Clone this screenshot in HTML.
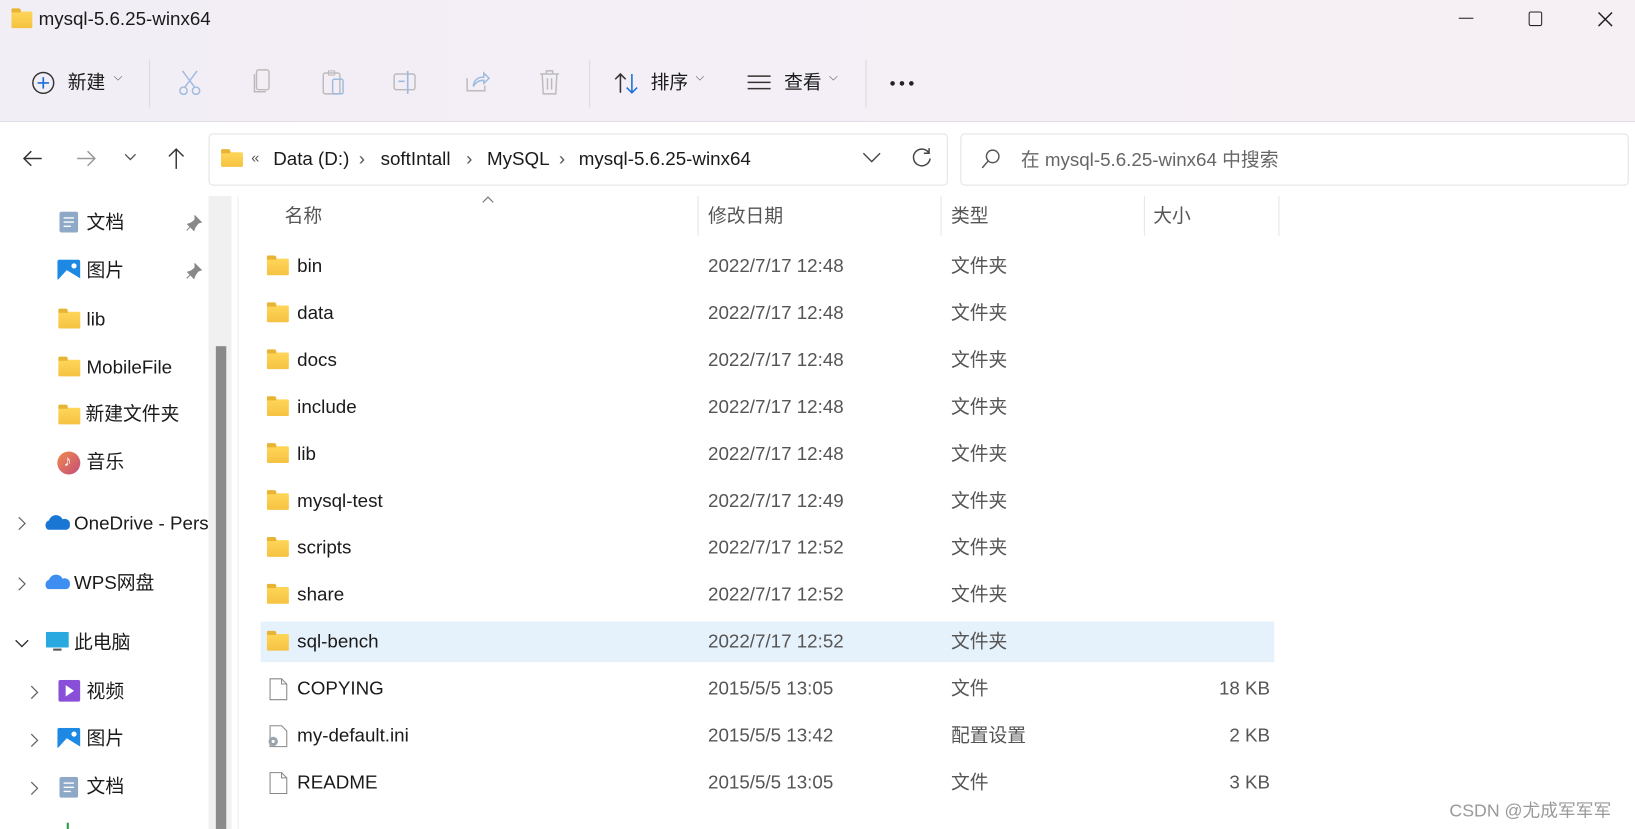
<!DOCTYPE html>
<html><head><meta charset="utf-8"><style>
*{margin:0;padding:0;box-sizing:border-box}
html,body{width:1635px;height:829px;overflow:hidden;background:#fff}
#w{position:absolute;left:0;top:0;width:1568px;height:795px;transform:scale(1.04273);transform-origin:0 0;font-family:"Liberation Sans","Noto Sans CJK SC",sans-serif;color:#1a1a1a;font-size:18px}
.a{position:absolute;white-space:nowrap}
.c{margin-top:-3px}
#top{position:absolute;left:0;top:0;width:1568px;height:117px;background:linear-gradient(90deg,#f2eef5,#f5eff6 60%,#f6f0f4);border-bottom:1px solid #e2dde4}
.sep{position:absolute;width:1px;height:46px;top:57px;background:#dcd7de}
.fold{position:absolute;width:21px;height:16px;background:linear-gradient(#ffd659,#f5c242);border-radius:1px}
.fold:before{content:"";position:absolute;left:0;top:-3px;width:9px;height:4px;background:#e8b434;border-radius:1px 2px 0 0}
.row{position:absolute;left:250px;width:972px;height:40px}
.ico{stroke:#9dbbe0;fill:none;stroke-width:1.4}
.g{color:#555}
</style></head><body><div id="w">
<div id="top">
 <div class="fold" style="left:11px;top:11px;width:20px"></div>
 <div class="a" style="left:37px;top:8px;font-size:18px">mysql-5.6.25-winx64</div>
 <div class="a" style="left:1399px;top:17px;width:14px;height:1px;background:#222"></div>
 <div class="a" style="left:1466px;top:11px;width:13px;height:14px;border:1.5px solid #222;border-radius:2px"></div>
 <svg class="a" style="left:1532px;top:11px" width="15" height="15"><path d="M1 1L14 14M14 1L1 14" stroke="#222" stroke-width="1.4"/></svg>
 <svg class="a" style="left:30px;top:68px" width="23" height="23"><circle cx="11.5" cy="11.5" r="10" fill="none" stroke="#333" stroke-width="1.4"/><path d="M11.5 6v11M6 11.5h11" stroke="#1d6fd8" stroke-width="1.6"/></svg>
 <div class="a c" style="left:65px;top:68px">新建</div><div class="a" style="left:109px;top:68px;font-size:11px;color:#555">⌵</div>
 <div class="sep" style="left:143px"></div>
 <svg class="a" style="left:170px;top:66px" width="24" height="26"><path class="ico" d="M5 2l12 16M19 2L7 18"/><circle class="ico" cx="6" cy="21" r="3.5"/><circle class="ico" cx="18" cy="21" r="3.5"/></svg>
 <svg class="a" style="left:240px;top:66px" width="22" height="26"><rect x="6" y="1" width="12" height="19" rx="2" fill="none" stroke="#bbb" stroke-width="1.4"/><path d="M4 5v17h11" fill="none" stroke="#bbb" stroke-width="1.4"/></svg>
 <svg class="a" style="left:308px;top:66px" width="24" height="26"><rect x="2" y="4" width="16" height="20" rx="2" fill="none" stroke="#bbb" stroke-width="1.4"/><rect x="7" y="2" width="6" height="4" fill="none" stroke="#bbb"/><rect x="11" y="10" width="10" height="14" rx="1.5" fill="none" stroke="#9dbbe0" stroke-width="1.4"/></svg>
 <svg class="a" style="left:376px;top:66px" width="26" height="26"><rect x="2" y="5" width="20" height="15" rx="2" fill="none" stroke="#bbb" stroke-width="1.4"/><path d="M15 2v22M6 12h6" stroke="#9dbbe0" stroke-width="1.6"/></svg>
 <svg class="a" style="left:446px;top:66px" width="24" height="26"><path d="M2 9v12h17v-5" fill="none" stroke="#bbb" stroke-width="1.4"/><path d="M8 17c0-6 4-9 10-9V4l5 5-5 5v-3c-5 0-8 2-10 6z" fill="none" stroke="#9dbbe0" stroke-width="1.4"/></svg>
 <svg class="a" style="left:516px;top:66px" width="22" height="26"><path d="M2 5h18M8 5V2h6v3M4 5l1 19h12l1-19M9 9v11M13 9v11" fill="none" stroke="#bbb" stroke-width="1.4"/></svg>
 <div class="sep" style="left:565px"></div>
 <svg class="a" style="left:588px;top:68px" width="26" height="24"><path d="M7 21V3M2 8l5-5 5 5" fill="none" stroke="#333" stroke-width="1.5"/><path d="M18 3v18M13 16l5 5 5-5" fill="none" stroke="#1d6fd8" stroke-width="1.5"/></svg>
 <div class="a c" style="left:624px;top:68px">排序</div><div class="a" style="left:667px;top:68px;font-size:11px;color:#555">⌵</div>
 <svg class="a" style="left:716px;top:70px" width="24" height="20"><path d="M1 3h22M1 9h22M1 15h22" stroke="#333" stroke-width="1.5"/></svg>
 <div class="a c" style="left:752px;top:68px">查看</div><div class="a" style="left:795px;top:68px;font-size:11px;color:#555">⌵</div>
 <div class="sep" style="left:830px"></div>
 <svg class="a" style="left:853px;top:77px" width="26" height="6"><circle cx="3" cy="3" r="2.2" fill="#222"/><circle cx="12" cy="3" r="2.2" fill="#222"/><circle cx="21" cy="3" r="2.2" fill="#222"/></svg>
</div>
<!-- nav -->
<svg class="a" style="left:21px;top:142px" width="20" height="20"><path d="M19 10H2M9 3L2 10l7 7" fill="none" stroke="#333" stroke-width="1.4"/></svg>
<svg class="a" style="left:73px;top:142px" width="20" height="20"><path d="M1 10h17M11 3l7 7-7 7" fill="none" stroke="#999" stroke-width="1.4"/></svg>
<svg class="a" style="left:119px;top:147px" width="12" height="8"><path d="M1 1l5 5 5-5" fill="none" stroke="#555" stroke-width="1.3"/></svg>
<svg class="a" style="left:159px;top:141px" width="20" height="22"><path d="M10 21V2M3 9l7-7 7 7" fill="none" stroke="#333" stroke-width="1.4"/></svg>
<div class="a" style="left:200px;top:128px;width:709px;height:50px;border:1px solid #e3e3e3;border-radius:4px"></div>
<div class="fold" style="left:212px;top:146px;width:21px;height:14px"></div>
<div class="a" style="left:241px;top:143px;font-size:14px;color:#555">«</div>
<div class="a" style="left:262px;top:142px">Data (D:)</div>
<div class="a" style="left:344px;top:142px;color:#555">›</div>
<div class="a" style="left:365px;top:142px">softIntall</div>
<div class="a" style="left:447px;top:142px;color:#555">›</div>
<div class="a" style="left:467px;top:142px">MySQL</div>
<div class="a" style="left:536px;top:142px;color:#555">›</div>
<div class="a" style="left:555px;top:142px">mysql-5.6.25-winx64</div>
<svg class="a" style="left:827px;top:146px" width="18" height="10"><path d="M1 1l8 8 8-8" fill="none" stroke="#444" stroke-width="1.3"/></svg>
<svg class="a" style="left:874px;top:141px" width="20" height="20"><path d="M17 6A8 8 0 1 0 18 11" fill="none" stroke="#444" stroke-width="1.4"/><path d="M17 1v5h-5" fill="none" stroke="#444" stroke-width="1.4"/></svg>
<div class="a" style="left:921px;top:128px;width:641px;height:50px;border:1px solid #e3e3e3;border-radius:4px"></div>
<svg class="a" style="left:940px;top:142px" width="20" height="20"><circle cx="12" cy="8" r="6" fill="none" stroke="#555" stroke-width="1.4"/><path d="M8 12l-6 7" stroke="#555" stroke-width="1.4"/></svg>
<div class="a c" style="left:979px;top:142px;color:#666">在 mysql-5.6.25-winx64 中搜索</div>
<!-- sidebar -->
<div class="a" style="left:200px;top:188px;width:22px;height:607px;background:#f0f0f0"></div>
<div class="a" style="left:207px;top:332px;width:10px;height:463px;background:#8a8a8a"></div>
<div class="a" style="left:228px;top:188px;width:1px;height:607px;background:#eee"></div>
<svg class="a" style="left:57px;top:203px" width="18" height="20"><rect width="18" height="20" rx="2" fill="#8ea8c8"/><path d="M4 6h10M4 10h10M4 14h7" stroke="#fff" stroke-width="1.3"/></svg>
<div class="a c" style="left:83px;top:202px">文档</div>
<svg class="a" style="left:178px;top:206px" width="16" height="16"><path d="M9 1l6 6-3 1-3 4-1 3-6-6 3-1 4-3zM5 11l-4 4" fill="#888" stroke="#888"/></svg>
<svg class="a" style="left:55px;top:249px" width="22" height="20"><rect width="22" height="20" rx="2" fill="#1e88e5"/><path d="M0 20l9-10 13 8v2z" fill="#fff"/><circle cx="16" cy="6" r="2.5" fill="#fff"/></svg>
<div class="a c" style="left:83px;top:248px">图片</div>
<svg class="a" style="left:178px;top:252px" width="16" height="16"><path d="M9 1l6 6-3 1-3 4-1 3-6-6 3-1 4-3zM5 11l-4 4" fill="#888" stroke="#888"/></svg>
<div class="fold" style="left:56px;top:299px"></div><div class="a" style="left:83px;top:296px">lib</div>
<div class="fold" style="left:56px;top:345px"></div><div class="a" style="left:83px;top:342px">MobileFile</div>
<div class="fold" style="left:56px;top:391px"></div><div class="a c" style="left:82px;top:386px">新建文件夹</div>
<div class="a" style="left:55px;top:433px;width:22px;height:22px;border-radius:50%;background:linear-gradient(135deg,#f08a4b,#c44d7a)"></div><div class="a" style="left:61px;top:434px;color:#fff;font-size:15px">♪</div>
<div class="a c" style="left:83px;top:432px">音乐</div>
<svg class="a" style="left:17px;top:495px" width="8" height="14"><path d="M1 1l6 6-6 6" fill="none" stroke="#666" stroke-width="1.2"/></svg>
<svg class="a" style="left:43px;top:493px" width="24" height="16"><path d="M3 15a5 5 0 0 1 1-9 7 7 0 0 1 13-1 5 5 0 0 1 4 10z" fill="#1976d2"/></svg>
<div class="a" style="left:71px;top:492px">OneDrive - Pers</div>
<svg class="a" style="left:17px;top:553px" width="8" height="14"><path d="M1 1l6 6-6 6" fill="none" stroke="#666" stroke-width="1.2"/></svg>
<svg class="a" style="left:43px;top:550px" width="24" height="16"><path d="M3 15a5 5 0 0 1 1-9 7 7 0 0 1 13-1 5 5 0 0 1 4 10z" fill="#3d8ef0"/></svg>
<div class="a c" style="left:71px;top:548px">WPS网盘</div>
<svg class="a" style="left:14px;top:613px" width="14" height="8"><path d="M1 1l6 6 6-6" fill="none" stroke="#333" stroke-width="1.3"/></svg>
<svg class="a" style="left:44px;top:606px" width="22" height="20"><rect width="22" height="15" rx="1" fill="#29a9e0"/><rect x="7" y="16" width="8" height="2" fill="#555"/></svg>
<div class="a c" style="left:71px;top:605px">此电脑</div>
<svg class="a" style="left:29px;top:657px" width="8" height="14"><path d="M1 1l6 6-6 6" fill="none" stroke="#666" stroke-width="1.2"/></svg>
<svg class="a" style="left:56px;top:652px" width="21" height="21"><rect width="21" height="21" rx="2" fill="#8a4fd8"/><path d="M7 5v11l8-5.5z" fill="#fff"/></svg>
<div class="a c" style="left:83px;top:652px">视频</div>
<svg class="a" style="left:29px;top:703px" width="8" height="14"><path d="M1 1l6 6-6 6" fill="none" stroke="#666" stroke-width="1.2"/></svg>
<svg class="a" style="left:55px;top:698px" width="22" height="20"><rect width="22" height="20" rx="2" fill="#1e88e5"/><path d="M0 20l9-10 13 8v2z" fill="#fff"/><circle cx="16" cy="6" r="2.5" fill="#fff"/></svg>
<div class="a c" style="left:83px;top:697px">图片</div>
<svg class="a" style="left:29px;top:749px" width="8" height="14"><path d="M1 1l6 6-6 6" fill="none" stroke="#666" stroke-width="1.2"/></svg>
<svg class="a" style="left:57px;top:745px" width="18" height="20"><rect width="18" height="20" rx="2" fill="#8ea8c8"/><path d="M4 6h10M4 10h10M4 14h7" stroke="#fff" stroke-width="1.3"/></svg>
<div class="a c" style="left:83px;top:743px">文档</div>
<div class="a" style="left:64px;top:789px;width:2px;height:6px;background:#2a9d4a"></div>
<!-- headers -->
<div class="a c g" style="left:273px;top:196px">名称</div>
<svg class="a" style="left:462px;top:188px" width="12" height="7"><path d="M1 6l5-5 5 5" fill="none" stroke="#777" stroke-width="1.1"/></svg>
<div class="a c g" style="left:679px;top:196px">修改日期</div>
<div class="a c g" style="left:912px;top:196px">类型</div>
<div class="a c g" style="left:1106px;top:196px">大小</div>
<div class="a" style="left:669px;top:188px;width:1px;height:38px;background:#e5e5e5"></div>
<div class="a" style="left:902px;top:188px;width:1px;height:38px;background:#e5e5e5"></div>
<div class="a" style="left:1097px;top:188px;width:1px;height:38px;background:#e5e5e5"></div>
<div class="a" style="left:1226px;top:188px;width:1px;height:38px;background:#e5e5e5"></div>
<div class="row" style="top:596px;height:39px;background:#e5f1fb"></div>
<div class="fold" style="left:256px;top:248px"></div><div class="a" style="left:285px;top:245px">bin</div><div class="a g" style="left:679px;top:245px">2022/7/17 12:48</div><div class="a c g" style="left:912px;top:244px">文件夹</div>
<div class="fold" style="left:256px;top:293px"></div><div class="a" style="left:285px;top:290px">data</div><div class="a g" style="left:679px;top:290px">2022/7/17 12:48</div><div class="a c g" style="left:912px;top:289px">文件夹</div>
<div class="fold" style="left:256px;top:338px"></div><div class="a" style="left:285px;top:335px">docs</div><div class="a g" style="left:679px;top:335px">2022/7/17 12:48</div><div class="a c g" style="left:912px;top:334px">文件夹</div>
<div class="fold" style="left:256px;top:383px"></div><div class="a" style="left:285px;top:380px">include</div><div class="a g" style="left:679px;top:380px">2022/7/17 12:48</div><div class="a c g" style="left:912px;top:379px">文件夹</div>
<div class="fold" style="left:256px;top:428px"></div><div class="a" style="left:285px;top:425px">lib</div><div class="a g" style="left:679px;top:425px">2022/7/17 12:48</div><div class="a c g" style="left:912px;top:424px">文件夹</div>
<div class="fold" style="left:256px;top:473px"></div><div class="a" style="left:285px;top:470px">mysql-test</div><div class="a g" style="left:679px;top:470px">2022/7/17 12:49</div><div class="a c g" style="left:912px;top:469px">文件夹</div>
<div class="fold" style="left:256px;top:518px"></div><div class="a" style="left:285px;top:515px">scripts</div><div class="a g" style="left:679px;top:515px">2022/7/17 12:52</div><div class="a c g" style="left:912px;top:514px">文件夹</div>
<div class="fold" style="left:256px;top:563px"></div><div class="a" style="left:285px;top:560px">share</div><div class="a g" style="left:679px;top:560px">2022/7/17 12:52</div><div class="a c g" style="left:912px;top:559px">文件夹</div>
<div class="fold" style="left:256px;top:608px"></div><div class="a" style="left:285px;top:605px">sql-bench</div><div class="a g" style="left:679px;top:605px">2022/7/17 12:52</div><div class="a c g" style="left:912px;top:604px">文件夹</div>
<svg class="a" style="left:258px;top:650px" width="18" height="22"><path d="M1 1h11l5 5v15H1z" fill="#fff" stroke="#888"/><path d="M12 1v5h5" fill="none" stroke="#888"/></svg>
<div class="a" style="left:285px;top:650px">COPYING</div><div class="a g" style="left:679px;top:650px">2015/5/5 13:05</div><div class="a c g" style="left:912px;top:649px">文件</div><div class="a g" style="left:1169px;top:650px">18 KB</div>
<svg class="a" style="left:256px;top:695px" width="20" height="22"><path d="M3 1h11l5 5v15H3z" fill="#fff" stroke="#888"/><circle cx="6" cy="16" r="4.5" fill="#9aa4ad"/><circle cx="6" cy="16" r="1.5" fill="#fff"/></svg>
<div class="a" style="left:285px;top:695px">my-default.ini</div><div class="a g" style="left:679px;top:695px">2015/5/5 13:42</div><div class="a c g" style="left:912px;top:694px">配置设置</div><div class="a g" style="left:1179px;top:695px">2 KB</div>
<svg class="a" style="left:258px;top:740px" width="18" height="22"><path d="M1 1h11l5 5v15H1z" fill="#fff" stroke="#888"/><path d="M12 1v5h5" fill="none" stroke="#888"/></svg>
<div class="a" style="left:285px;top:740px">README</div><div class="a g" style="left:679px;top:740px">2015/5/5 13:05</div><div class="a c g" style="left:912px;top:739px">文件</div><div class="a g" style="left:1179px;top:740px">3 KB</div>
<div class="a c" style="left:1390px;top:766px;font-size:17px;color:#999">CSDN @尤成军军军</div>
</div></body></html>
